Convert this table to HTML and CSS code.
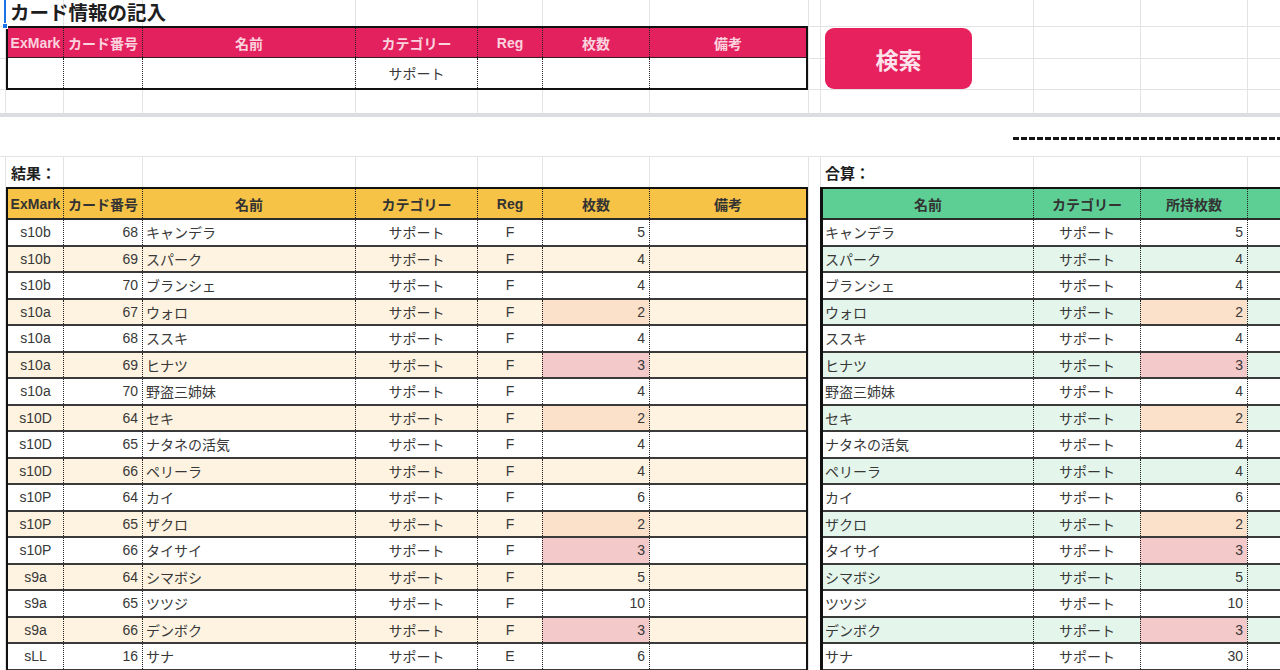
FILE: index.html
```html
<!DOCTYPE html>
<html lang="ja">
<head>
<meta charset="utf-8">
<title>カード情報の記入</title>
<link rel="stylesheet" href="styles.css">
</head>
<body>
<div class="sheet">
  <div class="cursor"><span class="cursor-handle"></span></div>

  <section class="entry">
    <div class="entry-main">
      <h1 class="title">カード情報の記入</h1>
      <div class="tbl tbl-entry">
        <div class="row head">
          <div>ExMark</div><div>カード番号</div><div>名前</div><div>カテゴリー</div><div>Reg</div><div>枚数</div><div>備考</div>
        </div>
        <div class="row">
          <div></div><div></div><div></div><div class="c">サポート</div><div></div><div></div><div></div>
        </div>
      </div>
    </div>
    <button class="search" type="button">検索</button>
  </section>

  <div class="freeze"></div>

  <div class="spacer"><div class="dashes"></div></div>

  <section class="results">
    <div class="panel panel-left">
      <h2 class="label">結果：</h2>
      <div class="tbl tbl-result">
        <div class="row head">
          <div>ExMark</div><div>カード番号</div><div>名前</div><div>カテゴリー</div><div>Reg</div><div>枚数</div><div>備考</div>
        </div>
        <div class="row"><div class="c">s10b</div><div class="r">68</div><div class="l">キャンデラ</div><div class="c">サポート</div><div class="c">F</div><div class="r">5</div><div></div></div>
        <div class="row alt"><div class="c">s10b</div><div class="r">69</div><div class="l">スパーク</div><div class="c">サポート</div><div class="c">F</div><div class="r">4</div><div></div></div>
        <div class="row"><div class="c">s10b</div><div class="r">70</div><div class="l">ブランシェ</div><div class="c">サポート</div><div class="c">F</div><div class="r">4</div><div></div></div>
        <div class="row alt"><div class="c">s10a</div><div class="r">67</div><div class="l">ウォロ</div><div class="c">サポート</div><div class="c">F</div><div class="r q2">2</div><div></div></div>
        <div class="row"><div class="c">s10a</div><div class="r">68</div><div class="l">ススキ</div><div class="c">サポート</div><div class="c">F</div><div class="r">4</div><div></div></div>
        <div class="row alt"><div class="c">s10a</div><div class="r">69</div><div class="l">ヒナツ</div><div class="c">サポート</div><div class="c">F</div><div class="r q3">3</div><div></div></div>
        <div class="row"><div class="c">s10a</div><div class="r">70</div><div class="l">野盗三姉妹</div><div class="c">サポート</div><div class="c">F</div><div class="r">4</div><div></div></div>
        <div class="row alt"><div class="c">s10D</div><div class="r">64</div><div class="l">セキ</div><div class="c">サポート</div><div class="c">F</div><div class="r q2">2</div><div></div></div>
        <div class="row"><div class="c">s10D</div><div class="r">65</div><div class="l">ナタネの活気</div><div class="c">サポート</div><div class="c">F</div><div class="r">4</div><div></div></div>
        <div class="row alt"><div class="c">s10D</div><div class="r">66</div><div class="l">ペリーラ</div><div class="c">サポート</div><div class="c">F</div><div class="r">4</div><div></div></div>
        <div class="row"><div class="c">s10P</div><div class="r">64</div><div class="l">カイ</div><div class="c">サポート</div><div class="c">F</div><div class="r">6</div><div></div></div>
        <div class="row alt"><div class="c">s10P</div><div class="r">65</div><div class="l">ザクロ</div><div class="c">サポート</div><div class="c">F</div><div class="r q2">2</div><div></div></div>
        <div class="row"><div class="c">s10P</div><div class="r">66</div><div class="l">タイサイ</div><div class="c">サポート</div><div class="c">F</div><div class="r q3">3</div><div></div></div>
        <div class="row alt"><div class="c">s9a</div><div class="r">64</div><div class="l">シマボシ</div><div class="c">サポート</div><div class="c">F</div><div class="r">5</div><div></div></div>
        <div class="row"><div class="c">s9a</div><div class="r">65</div><div class="l">ツツジ</div><div class="c">サポート</div><div class="c">F</div><div class="r">10</div><div></div></div>
        <div class="row alt"><div class="c">s9a</div><div class="r">66</div><div class="l">デンボク</div><div class="c">サポート</div><div class="c">F</div><div class="r q3">3</div><div></div></div>
        <div class="row"><div class="c">sLL</div><div class="r">16</div><div class="l">サナ</div><div class="c">サポート</div><div class="c">E</div><div class="r">6</div><div></div></div>
      </div>
    </div>

    <div class="panel panel-right">
      <h2 class="label">合算：</h2>
      <div class="tbl tbl-sum">
        <div class="row head">
          <div>名前</div><div>カテゴリー</div><div>所持枚数</div><div></div>
        </div>
        <div class="row"><div class="l">キャンデラ</div><div class="c">サポート</div><div class="r">5</div><div></div></div>
        <div class="row alt"><div class="l">スパーク</div><div class="c">サポート</div><div class="r">4</div><div></div></div>
        <div class="row"><div class="l">ブランシェ</div><div class="c">サポート</div><div class="r">4</div><div></div></div>
        <div class="row alt"><div class="l">ウォロ</div><div class="c">サポート</div><div class="r q2">2</div><div></div></div>
        <div class="row"><div class="l">ススキ</div><div class="c">サポート</div><div class="r">4</div><div></div></div>
        <div class="row alt"><div class="l">ヒナツ</div><div class="c">サポート</div><div class="r q3">3</div><div></div></div>
        <div class="row"><div class="l">野盗三姉妹</div><div class="c">サポート</div><div class="r">4</div><div></div></div>
        <div class="row alt"><div class="l">セキ</div><div class="c">サポート</div><div class="r q2">2</div><div></div></div>
        <div class="row"><div class="l">ナタネの活気</div><div class="c">サポート</div><div class="r">4</div><div></div></div>
        <div class="row alt"><div class="l">ペリーラ</div><div class="c">サポート</div><div class="r">4</div><div></div></div>
        <div class="row"><div class="l">カイ</div><div class="c">サポート</div><div class="r">6</div><div></div></div>
        <div class="row alt"><div class="l">ザクロ</div><div class="c">サポート</div><div class="r q2">2</div><div></div></div>
        <div class="row"><div class="l">タイサイ</div><div class="c">サポート</div><div class="r q3">3</div><div></div></div>
        <div class="row alt"><div class="l">シマボシ</div><div class="c">サポート</div><div class="r">5</div><div></div></div>
        <div class="row"><div class="l">ツツジ</div><div class="c">サポート</div><div class="r">10</div><div></div></div>
        <div class="row alt"><div class="l">デンボク</div><div class="c">サポート</div><div class="r q3">3</div><div></div></div>
        <div class="row"><div class="l">サナ</div><div class="c">サポート</div><div class="r">30</div><div></div></div>
      </div>
    </div>
  </section>
</div>
</body>
</html>
```

FILE: styles.css
```css
* { box-sizing: border-box; }

html, body {
  margin: 0;
  padding: 0;
  background: #fff;
}

body {
  font-family: "Liberation Sans", "Noto Sans CJK JP", sans-serif;
  color: #333;
  font-size: 14px;
}

.sheet {
  position: relative;
  width: 1280px;
  height: 670px;
  overflow: hidden;
  background-color: #fff;
  background-image:
    linear-gradient(#e3e3e3, #e3e3e3),
    linear-gradient(#e3e3e3, #e3e3e3),
    linear-gradient(#e3e3e3, #e3e3e3),
    linear-gradient(#e3e3e3, #e3e3e3),
    linear-gradient(#e3e3e3, #e3e3e3),
    linear-gradient(#e3e3e3, #e3e3e3),
    linear-gradient(#e3e3e3, #e3e3e3),
    linear-gradient(#e3e3e3, #e3e3e3),
    linear-gradient(#e3e3e3, #e3e3e3),
    linear-gradient(#e3e3e3, #e3e3e3),
    linear-gradient(#e3e3e3, #e3e3e3),
    linear-gradient(#e3e3e3, #e3e3e3);
  background-repeat: no-repeat;
  background-size: 1px 100%;
  background-position:
    5px 0, 63px 0, 142px 0, 355px 0, 477px 0, 542px 0,
    649px 0, 808px 0, 820px 0, 1033px 0, 1140px 0, 1247px 0;
}

/* selection cursor overlay */
.cursor {
  position: absolute;
  left: 4px;
  top: 0;
  width: 2px;
  height: 25px;
  background: #1a73e8;
}
.cursor-handle {
  position: absolute;
  left: -2px;
  top: 23px;
  width: 6px;
  height: 6px;
  background: #1a73e8;
  border: 1px solid #fff;
}

/* ---------- entry section ---------- */
.entry {
  display: flex;
  align-items: flex-start;
  height: 113px;
  background-image:
    linear-gradient(#e3e3e3, #e3e3e3),
    linear-gradient(#e3e3e3, #e3e3e3),
    linear-gradient(#e3e3e3, #e3e3e3);
  background-repeat: no-repeat;
  background-size: 100% 1px;
  background-position: 0 26px, 0 58px, 0 89px;
}

.entry-main {
  width: 808px;
  flex: none;
}

.title {
  margin: 0;
  height: 26px;
  padding-left: 10px;
  font-size: 19.5px;
  line-height: 26px;
  font-weight: bold;
  color: #1e1e1e;
}

.search {
  flex: none;
  margin: 28px 0 0 17px;
  width: 147px;
  height: 61px;
  border: none;
  border-radius: 9px;
  background: #e6215e;
  color: #fde4ec;
  font-family: "Liberation Sans", "Noto Sans CJK JP", sans-serif;
  font-size: 23px;
  font-weight: bold;
  padding: 0;
}

.freeze {
  height: 4px;
  background: #dcdde0;
}

.spacer {
  height: 40px;
  background: #fff;
  border-bottom: 1px solid #e3e3e3;
  display: flex;
  justify-content: flex-end;
}

.dashes {
  width: 267px;
  height: 3px;
  margin-top: 20px;
  background: repeating-linear-gradient(90deg, #151515 0 6px, transparent 6px 8px);
}

/* ---------- tables ---------- */
.tbl {
  border: 2px solid #111;
  margin-left: 6px;
}

.row {
  display: grid;
  height: 26.5px;
  border-bottom: 2px solid #3a3a3a;
  background: #fff;
}

.row > div {
  display: flex;
  align-items: center;
  overflow: hidden;
  white-space: nowrap;
  font-size: 14px;
  color: #383838;
}

.row > div + div {
  border-left: 1px dotted #222;
}

.row > .c { justify-content: center; }
.row > .r { justify-content: flex-end; padding-right: 4px; }
.row > .l { justify-content: flex-start; padding-left: 3px; }

.row.head > div {
  justify-content: center;
  font-weight: bold;
  color: #333;
}

.q2 { background: #fbe0ca; }
.q3 { background: #f3c9ca; }

/* entry table */
.tbl-entry {
  width: 802px;
}
.tbl-entry .row {
  grid-template-columns: 55px 79px 213px 122px 65px 107px 157px;
  height: 30px;
  border-bottom: none;
}
.tbl-entry .row.head {
  background: #e3215e;
  border-bottom: 1px solid #3a1a22;
}
.tbl-entry .row.head > div {
  color: #fbd3df;
}

/* results */
.results {
  display: flex;
  align-items: flex-start;
}

.panel {
  flex: none;
}

.panel-left {
  width: 808px;
}

.panel-right {
  width: 540px;
  margin-left: 12px;
}

.label {
  margin: 0;
  height: 30px;
  line-height: 33px;
  font-size: 15px;
  font-weight: bold;
  color: #1e1e1e;
  padding-left: 5px;
}

.panel-left .label {
  padding-left: 11px;
}

.tbl-result {
  width: 802px;
}
.tbl-result .row {
  grid-template-columns: 55px 79px 213px 122px 65px 107px 157px;
}
.tbl-result .row.head {
  height: 31px;
  background: #f6c347;
  border-bottom-color: #2a2a2a;
}
.tbl-result .row.alt {
  background: #fdf3e0;
}

.tbl-sum {
  margin-left: 0;
  width: 540px;
  border-left-width: 3px;
  border-right: none;
}
.tbl-sum .row {
  grid-template-columns: 210px 107px 107px 107px;
}
.tbl-sum .row.head {
  height: 31px;
  background: #5dcf95;
  border-bottom-color: #2a2a2a;
}
.tbl-sum .row.alt {
  background: #e4f6ec;
}
.tbl-sum .row > .l {
  padding-left: 2px;
}
```
